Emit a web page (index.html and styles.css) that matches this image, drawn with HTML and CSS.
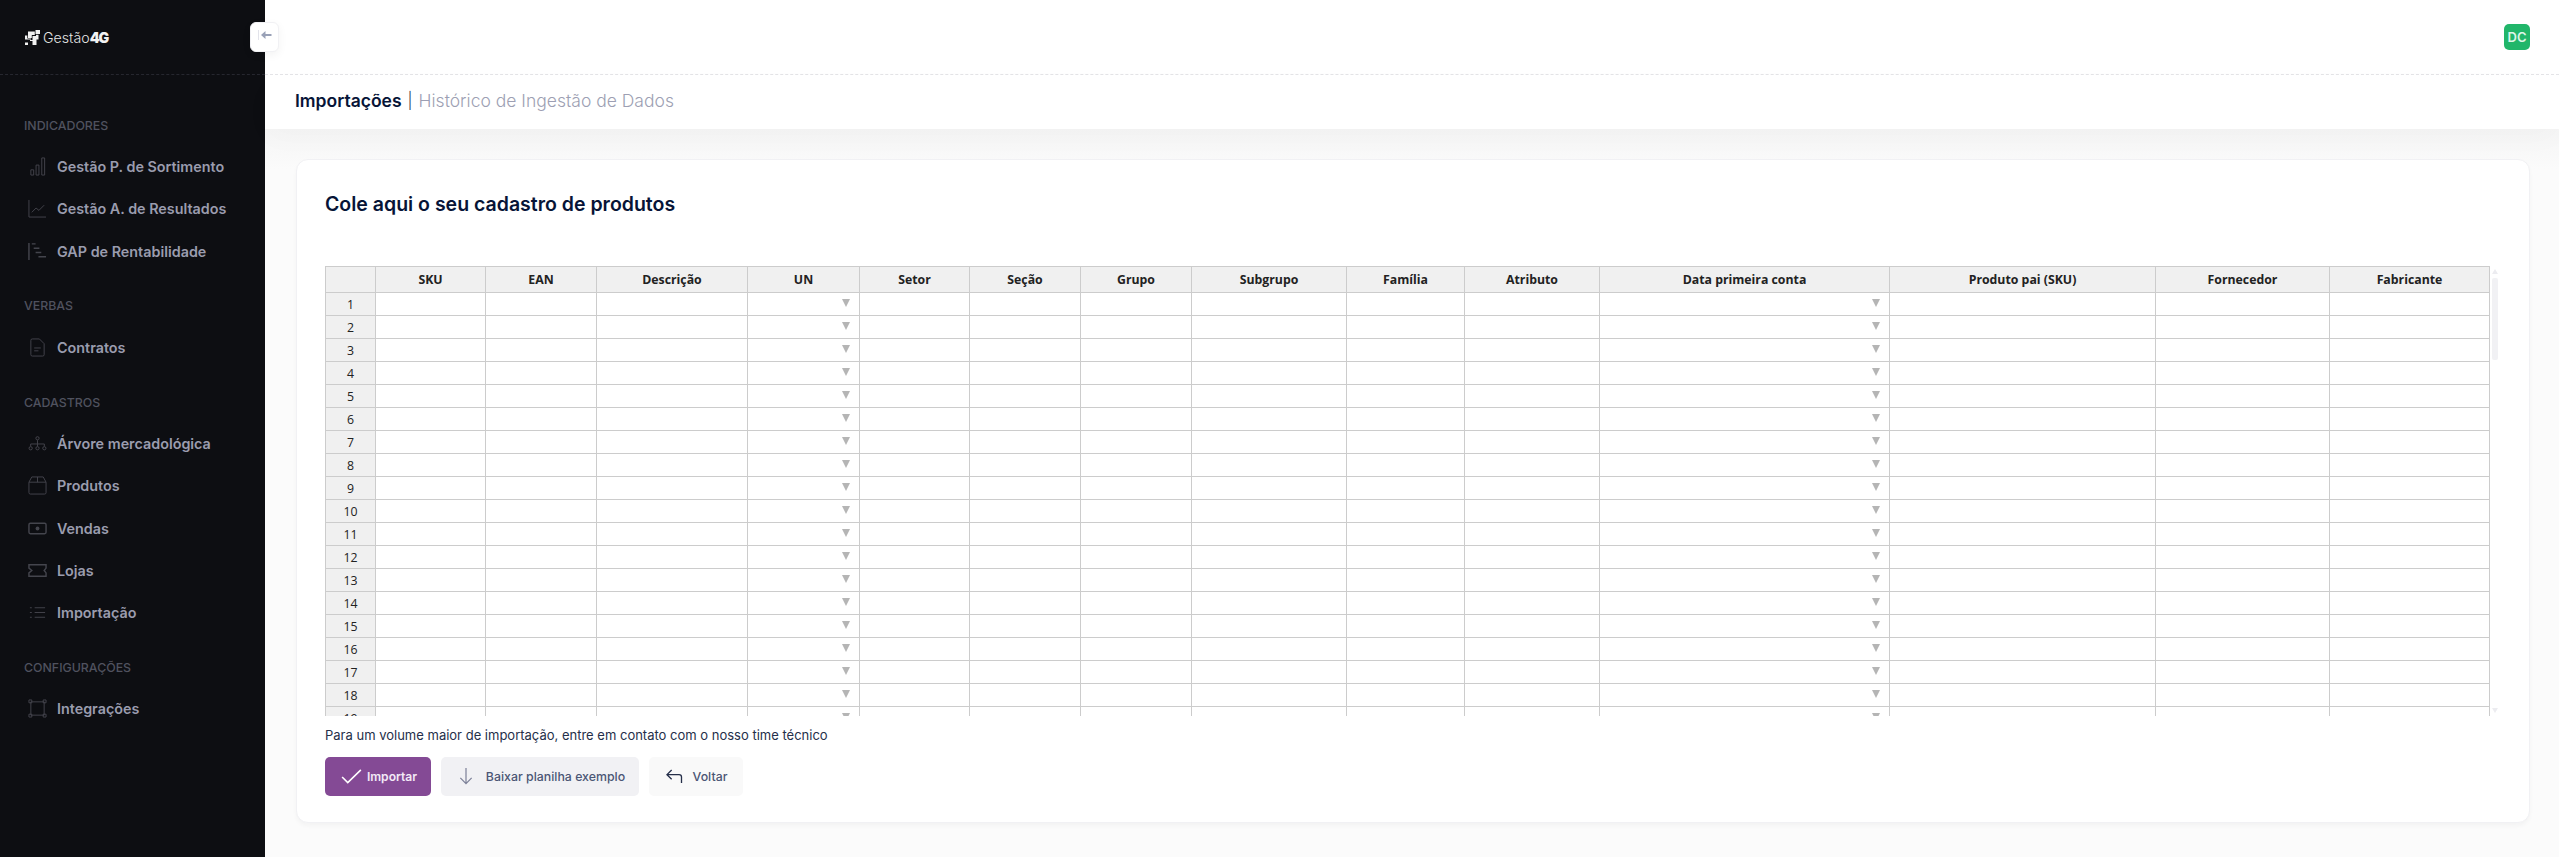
FILE: index.html
```html
<!DOCTYPE html>
<html lang="pt-BR">
<head>
<meta charset="utf-8">
<title>Importações</title>
<link rel="stylesheet" href="styles.css">
</head>
<body>
<div class="app">
  <aside class="sidebar">
    <div class="brand">
      <svg class="brand-mark" viewBox="0 0 15 15" width="15" height="15"><path d="M10.500 0H15V4H10.500zM3 1.500H9.800V5H6.800V8H3zM0 5.500H2.300V8.500H6V9.500H0zM7.500 6H11V4.800H13.500V9.500H11.500V15H7.500V11H5V10H7.500zM0 12.500H3V15H0z" fill="#f1f1f1"/></svg>
      <span class="brand-name">Gestão<b class="brand-num">4G</b></span>
    </div>
    <nav class="nav">
      <div class="nav-label">INDICADORES</div>
      <a class="nav-item"><svg class="ico" viewBox="0 0 20 20"><path d="M3 13.500h3V19H3zM8.500 8.500h3V19h-3zM14.500 1h3v18h-3z"/></svg>Gestão P. de Sortimento</a>
      <a class="nav-item"><svg class="ico" viewBox="0 0 20 20"><path d="M1 1v18h18M4 14l4.500-4.500 3 2.500L17 6.500"/></svg>Gestão A. de Resultados</a>
      <a class="nav-item"><svg class="ico ico-thick" viewBox="0 0 20 20"><path d="M1 1v18M4 2h4M6 6.500h6M8 11h6M11 15.500h8"/></svg>GAP de Rentabilidade</a>
      <div class="nav-label nav-gap">VERBAS</div>
      <a class="nav-item"><svg class="ico" viewBox="0 0 20 20"><path d="M4.500 1H12l5 5v11.500a1.500 1.500 0 0 1-1.500 1.500h-11A1.500 1.500 0 0 1 3 17.500v-15A1.500 1.500 0 0 1 4.500 1zM6.500 10.500h7M6.500 13.500h4.500"/></svg>Contratos</a>
      <div class="nav-label nav-gap">CADASTROS</div>
      <a class="nav-item"><svg class="ico" viewBox="0 0 20 20"><circle cx="10" cy="4.500" r="1.700"/><circle cx="2.800" cy="15" r="1.700"/><circle cx="10" cy="15" r="1.700"/><circle cx="17.200" cy="15" r="1.700"/><path d="M10 6.500v6.500M2.800 13v-2.500h14.400V13"/></svg>Árvore mercadológica</a>
      <a class="nav-item"><svg class="ico" viewBox="0 0 20 20"><path d="M1 6.500v11A1.500 1.500 0 0 0 2.500 19h15a1.500 1.500 0 0 0 1.500-1.500v-11zM1 6.500 4 1h12l3 5.500M10 1v5.500"/></svg>Produtos</a>
      <a class="nav-item"><svg class="ico ico-thick" viewBox="0 0 20 20"><rect x="1" y="4.500" width="18" height="11" rx="1.500"/><circle class="ico-fill" cx="10" cy="10" r="2"/></svg>Vendas</a>
      <a class="nav-item"><svg class="ico ico-thick" viewBox="0 0 20 20"><path d="M1 4h18v3.500l-2 2.500 2 2.500V16H1v-3.500L4 10 1 7.500z"/></svg>Lojas</a>
      <a class="nav-item"><svg class="ico" viewBox="0 0 20 20"><path d="M2 5h2M7 5h11M2 10h2M7 10h11M2 15h2M7 15h11"/></svg>Importação</a>
      <div class="nav-label nav-gap">CONFIGURAÇÕES</div>
      <a class="nav-item"><svg class="ico" viewBox="0 0 20 20"><path d="M3 3h14v14H3zM1 1h3v3H1zM16 1h3v3h-3zM1 16h3v3H1zM16 16h3v3h-3z"/></svg>Integrações</a>
    </nav>
  </aside>
  <button class="collapse" type="button" aria-label="Recolher"><svg viewBox="0 0 14 10" width="14" height="10"><path d="M0.500 0v10" stroke="#e2e3ea" stroke-width="1" fill="none"/><path d="M13.500 5H6" stroke="#99a1b7" stroke-width="2" fill="none"/><path d="M7.500 1 3 5l4.500 4z" fill="#99a1b7"/></svg></button>
  <main class="main">
    <header class="topbar"><span class="avatar">DC</span></header>
    <div class="subbar">
      <span class="crumb-active">Importações</span>
      <span class="crumb-sep">|</span>
      <span class="crumb-muted">Histórico de Ingestão de Dados</span>
    </div>
    <section class="content">
      <div class="card">
        <h1 class="card-title">Cole aqui o seu cadastro de produtos</h1>
        <div class="sheet">
          <div class="sheet-clip">
            <table class="grid">
              <colgroup><col class="c0"><col class="c1"><col class="c2"><col class="c3"><col class="c4"><col class="c5"><col class="c6"><col class="c7"><col class="c8"><col class="c9"><col class="c10"><col class="c11"><col class="c12"><col class="c13"><col class="c14"></colgroup>
              <thead><tr><th></th><th>SKU</th><th>EAN</th><th>Descrição</th><th>UN</th><th>Setor</th><th>Seção</th><th>Grupo</th><th>Subgrupo</th><th>Família</th><th>Atributo</th><th>Data primeira conta</th><th>Produto pai (SKU)</th><th>Fornecedor</th><th>Fabricante</th></tr></thead>
              <tbody>
                <tr><th>1</th><td></td><td></td><td></td><td class="dd"></td><td></td><td></td><td></td><td></td><td></td><td></td><td class="dd"></td><td></td><td></td><td></td></tr>
                <tr><th>2</th><td></td><td></td><td></td><td class="dd"></td><td></td><td></td><td></td><td></td><td></td><td></td><td class="dd"></td><td></td><td></td><td></td></tr>
                <tr><th>3</th><td></td><td></td><td></td><td class="dd"></td><td></td><td></td><td></td><td></td><td></td><td></td><td class="dd"></td><td></td><td></td><td></td></tr>
                <tr><th>4</th><td></td><td></td><td></td><td class="dd"></td><td></td><td></td><td></td><td></td><td></td><td></td><td class="dd"></td><td></td><td></td><td></td></tr>
                <tr><th>5</th><td></td><td></td><td></td><td class="dd"></td><td></td><td></td><td></td><td></td><td></td><td></td><td class="dd"></td><td></td><td></td><td></td></tr>
                <tr><th>6</th><td></td><td></td><td></td><td class="dd"></td><td></td><td></td><td></td><td></td><td></td><td></td><td class="dd"></td><td></td><td></td><td></td></tr>
                <tr><th>7</th><td></td><td></td><td></td><td class="dd"></td><td></td><td></td><td></td><td></td><td></td><td></td><td class="dd"></td><td></td><td></td><td></td></tr>
                <tr><th>8</th><td></td><td></td><td></td><td class="dd"></td><td></td><td></td><td></td><td></td><td></td><td></td><td class="dd"></td><td></td><td></td><td></td></tr>
                <tr><th>9</th><td></td><td></td><td></td><td class="dd"></td><td></td><td></td><td></td><td></td><td></td><td></td><td class="dd"></td><td></td><td></td><td></td></tr>
                <tr><th>10</th><td></td><td></td><td></td><td class="dd"></td><td></td><td></td><td></td><td></td><td></td><td></td><td class="dd"></td><td></td><td></td><td></td></tr>
                <tr><th>11</th><td></td><td></td><td></td><td class="dd"></td><td></td><td></td><td></td><td></td><td></td><td></td><td class="dd"></td><td></td><td></td><td></td></tr>
                <tr><th>12</th><td></td><td></td><td></td><td class="dd"></td><td></td><td></td><td></td><td></td><td></td><td></td><td class="dd"></td><td></td><td></td><td></td></tr>
                <tr><th>13</th><td></td><td></td><td></td><td class="dd"></td><td></td><td></td><td></td><td></td><td></td><td></td><td class="dd"></td><td></td><td></td><td></td></tr>
                <tr><th>14</th><td></td><td></td><td></td><td class="dd"></td><td></td><td></td><td></td><td></td><td></td><td></td><td class="dd"></td><td></td><td></td><td></td></tr>
                <tr><th>15</th><td></td><td></td><td></td><td class="dd"></td><td></td><td></td><td></td><td></td><td></td><td></td><td class="dd"></td><td></td><td></td><td></td></tr>
                <tr><th>16</th><td></td><td></td><td></td><td class="dd"></td><td></td><td></td><td></td><td></td><td></td><td></td><td class="dd"></td><td></td><td></td><td></td></tr>
                <tr><th>17</th><td></td><td></td><td></td><td class="dd"></td><td></td><td></td><td></td><td></td><td></td><td></td><td class="dd"></td><td></td><td></td><td></td></tr>
                <tr><th>18</th><td></td><td></td><td></td><td class="dd"></td><td></td><td></td><td></td><td></td><td></td><td></td><td class="dd"></td><td></td><td></td><td></td></tr>
                <tr><th>19</th><td></td><td></td><td></td><td class="dd"></td><td></td><td></td><td></td><td></td><td></td><td></td><td class="dd"></td><td></td><td></td><td></td></tr>
              </tbody>
            </table>
          </div>
          <div class="scrollbar">
            <span class="sb-up"></span>
            <span class="sb-thumb"></span>
            <span class="sb-down"></span>
          </div>
        </div>
        <p class="note">Para um volume maior de importação, entre em contato com o nosso time técnico</p>
        <div class="actions">
          <button class="btn btn-primary" type="button"><svg viewBox="0 0 22 16" width="21" height="15"><path d="M1 8.500 7 14.500 21 1" fill="none" stroke="#fff" stroke-width="1.700"/></svg>Importar</button>
          <button class="btn btn-light" type="button"><svg viewBox="0 0 14 18" width="14" height="17"><path d="M7 0v16M1 10.500 7 16.500 13 10.500" fill="none" stroke="#7e8299" stroke-width="1.300"/></svg>Baixar planilha exemplo</button>
          <button class="btn btn-ghost" type="button"><svg viewBox="0 0 18 16" width="18" height="15"><path d="M17 15V8.500a2.500 2.500 0 0 0-2.500-2.500H1.500M6.500 1l-5 5 5 5" fill="none" stroke="#252f4a" stroke-width="1.400"/></svg>Voltar</button>
        </div>
      </div>
    </section>
  </main>
</div>
</body>
</html>
```
FILE: styles.css
```css
* { box-sizing: border-box; }
html, body { margin: 0; height: 100%; overflow: hidden; }
body { font-family: Inter, "Noto Sans", sans-serif; background: #fbfbfb; color: #071437; }
.app { display: flex; height: 857px; position: relative; }

.sidebar { width: 265px; flex: none; background: #0d0e12; }
.brand { height: 75px; display: flex; align-items: center; gap: 3px; padding: 1px 0 0 25px; border-bottom: 1px dashed #26272f; }
.brand-mark { flex: none; }
.brand-name { font-family: Inter, sans-serif; font-size: 14.200px; font-weight: 300; color: #e6e6e6; }
.brand-num { font-weight: 900; color: #f2f2f2; letter-spacing: -1px; }
.nav { display: flex; flex-direction: column; padding: 41.500px 0 0 24px; }
.nav-label { height: 18px; line-height: 18px; font-size: 12.350px; font-weight: 500; color: #50525f; }
.nav-gap { margin-top: 25px; }
.nav-item { height: 42.250px; display: flex; align-items: center; gap: 10px; padding-left: 4px; font-size: 14.350px; font-weight: 600; color: #9a9cae; }
.nav-label + .nav-item { margin-top: 11px; }
.ico { width: 19px; height: 19px; flex: none; fill: none; stroke: #44454d; stroke-width: 1; }
.ico-thick { stroke-width: 1.500; }
.ico-fill { fill: #44454d; stroke: none; }

.collapse { position: absolute; left: 250px; top: 22px; width: 29px; height: 30px; padding: 0 0 4px; border: 1px solid #f1f1f4; border-radius: 6px; background: #fff; box-shadow: 0 3px 10px rgba(0,0,0,.05); display: flex; align-items: center; justify-content: center; }

.main { flex: 1; min-width: 0; display: flex; flex-direction: column; }
.topbar { height: 75px; flex: none; background: #fff; border-bottom: 1px dashed #e4e4e7; display: flex; align-items: center; justify-content: flex-end; padding: 0 29px 1px 0; }
.avatar { width: 26px; height: 26px; border-radius: 5px; background: #21b66a; color: #dff5e8; font-size: 13px; font-weight: 600; display: flex; align-items: center; justify-content: center; }
.subbar { height: 54px; flex: none; background: #fff; display: flex; align-items: center; gap: 6px; padding: 0 0 4px 30px; font-size: 17.500px; box-shadow: 0 10px 30px rgba(0,0,0,.02); position: relative; }
.crumb-active { font-weight: 600; color: #071437; }
.crumb-sep { font-size: 16px; font-weight: 300; color: #252f4a; }
.crumb-muted { font-weight: 300; color: #9d9fb3; }

.content { flex: 1; padding: 30px 29px 0 31px; background: linear-gradient(#f5f5f5, #fbfbfb 40px); }
.card { height: 664px; padding: 0 28px; background: #fff; border: 1px solid #f1f1f4; border-radius: 12px; box-shadow: 0 3px 4px rgba(0,0,0,.03); }
.card-title { margin: 0; padding-top: 29.500px; height: 106px; font-size: 19.500px; line-height: 28px; font-weight: 600; color: #071437; }

.sheet { display: flex; height: 450px; gap: 2px; width: 2173px; }
.sheet-clip { width: 2165px; height: 450px; overflow: hidden; flex: none; }
.grid { width: 2165px; table-layout: fixed; border-collapse: separate; border-spacing: 0; font-family: "Open Sans", sans-serif; font-size: 12.300px; color: #222; }
.c0 { width: 51px; } .c1 { width: 110px; } .c2 { width: 111px; } .c3 { width: 151px; } .c4 { width: 112px; }
.c5 { width: 110px; } .c6 { width: 111px; } .c7 { width: 111px; } .c8 { width: 155px; } .c9 { width: 118px; }
.c10 { width: 135px; } .c11 { width: 290px; } .c12 { width: 266px; } .c13 { width: 174px; } .c14 { width: 160px; }
.grid th, .grid td { padding: 0; border-right: 1px solid #ccc; border-bottom: 1px solid #ccc; }
.grid tr { height: 23px; }
.grid thead tr { height: 27px; }
.grid thead th { border-top: 1px solid #ccc; background: #f0f0f0; font-weight: 700; }
.grid tbody th { background: #f0f0f0; font-weight: 400; }
.grid tr > th:first-child { border-left: 1px solid #ccc; }
.grid td { background: #fff; position: relative; }
.grid .dd::after { content: ""; position: absolute; right: 9px; top: 6px; border-style: solid; border-width: 8px 4px 0; border-color: #b5b5b5 transparent transparent; }

.scrollbar { width: 6px; height: 450px; flex: none; display: flex; flex-direction: column; }
.sb-up { margin-top: 3px; flex: none; border-style: solid; border-width: 0 3px 5px; border-color: transparent transparent #ececf0; }
.sb-thumb { margin-top: 4px; height: 82px; flex: none; border-radius: 2px; background: #f1f1f4; }
.sb-down { margin-top: auto; margin-bottom: 3px; flex: none; border-style: solid; border-width: 5px 3px 0; border-color: #ececf0 transparent transparent; }

.note { margin: 10px 0 0; height: 18px; font-size: 13px; line-height: 18px; font-weight: 400; color: #252f4a; }
.actions { display: flex; gap: 10px; margin-top: 13px; }
.btn { height: 39px; padding: 0; border: 0; border-radius: 5px; font-family: Inter, sans-serif; font-size: 12.350px; font-weight: 500; display: flex; align-items: center; justify-content: center; }
.btn-primary { width: 106px; gap: 5px; padding-left: 2px; background: #844a95; color: #f3e9f6; font-size: 12.100px; font-weight: 600; }
.btn-light { width: 198px; gap: 13px; padding-left: 4px; background: #f1f1f4; color: #4b5675; }
.btn-ghost { width: 94px; gap: 10px; background: #f9f9f9; color: #4b5675; }
```
